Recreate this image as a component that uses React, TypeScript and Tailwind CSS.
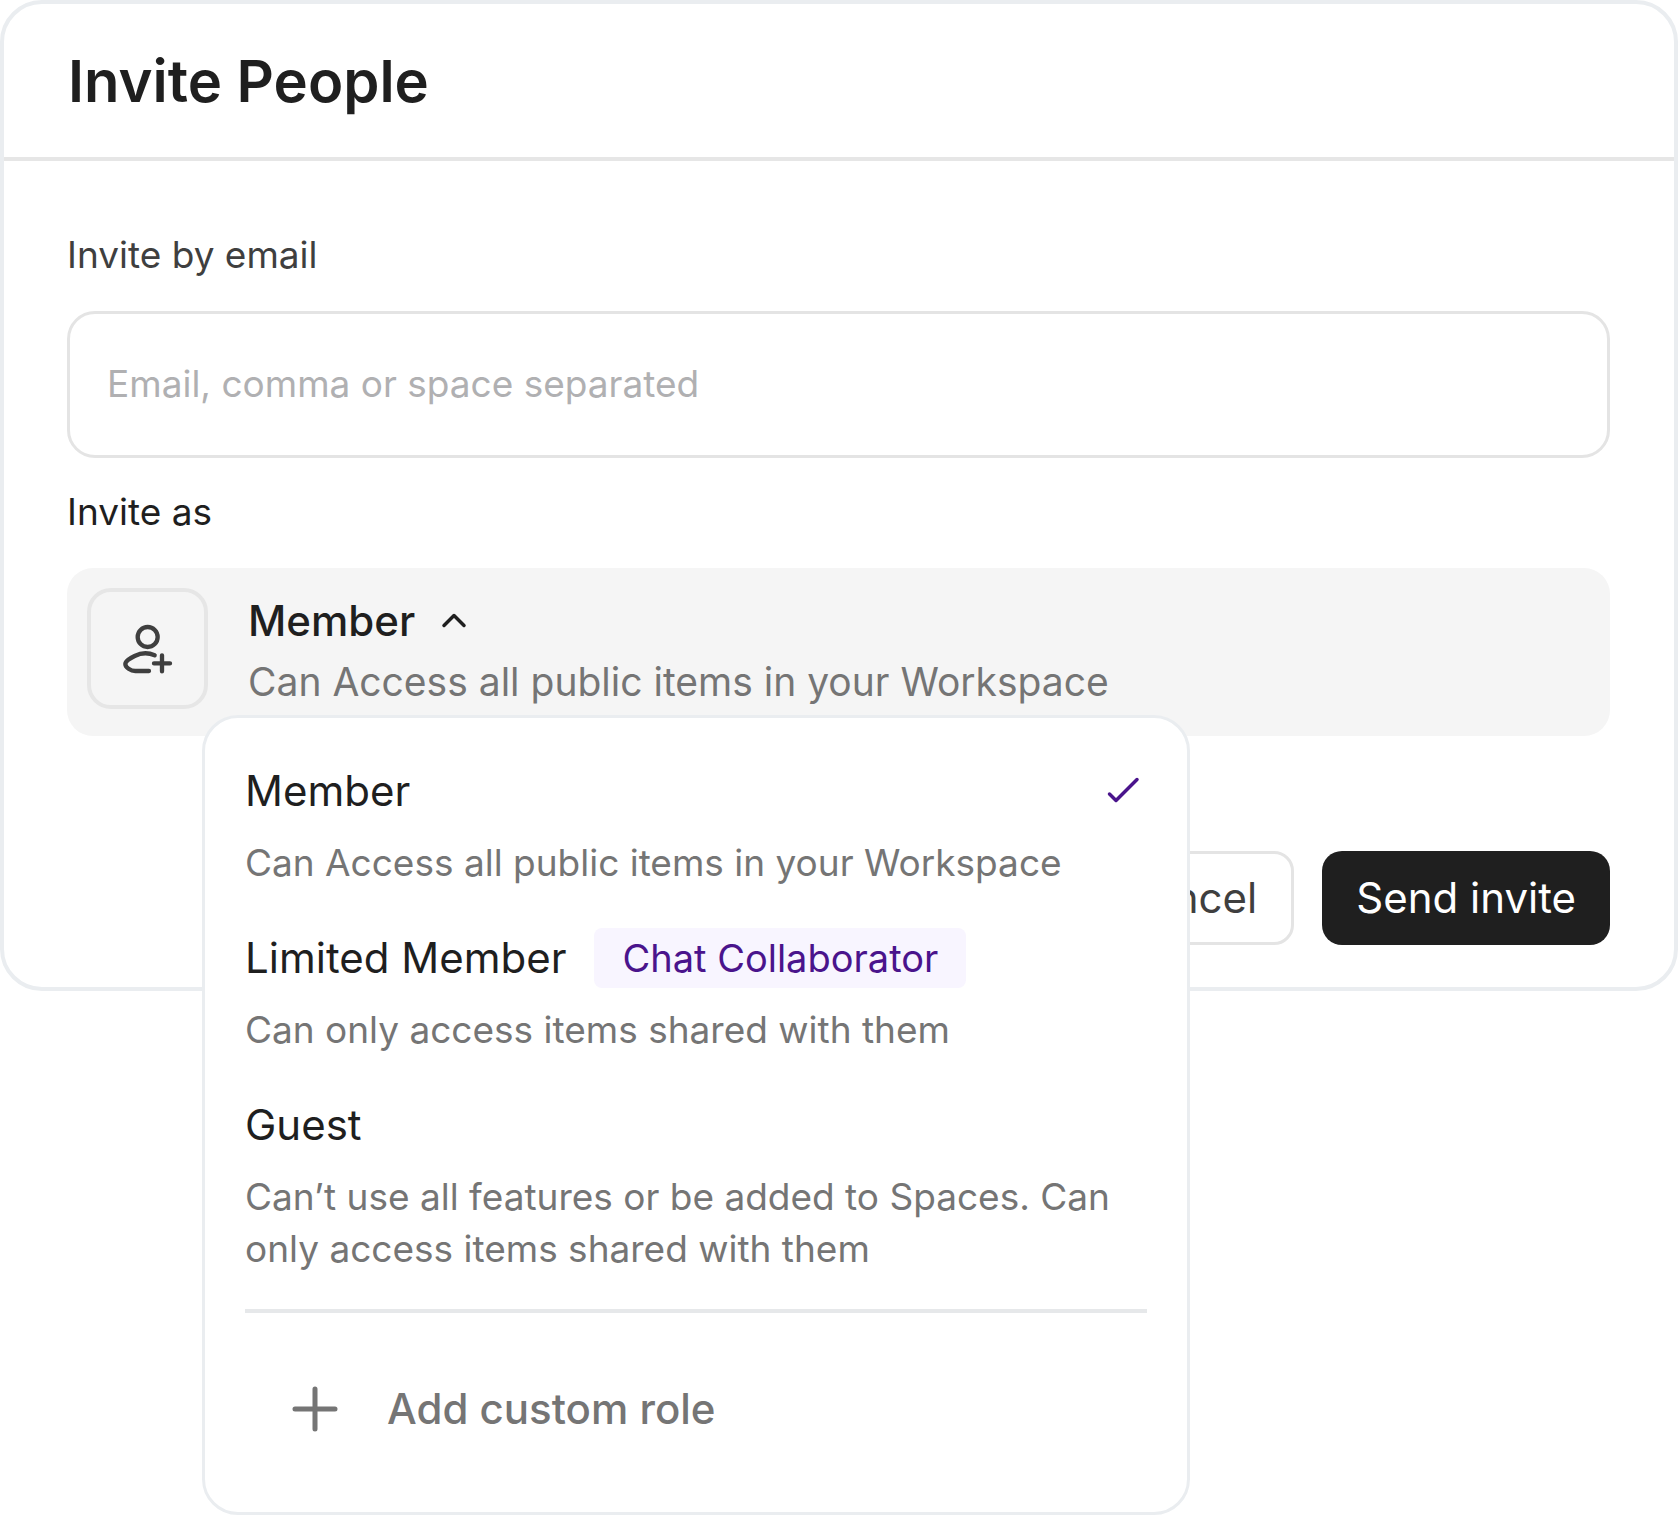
import { useState } from "react";
import type { FormEvent } from "react";
import clsx from "clsx";

type Role = {
  id: string;
  name: string;
  description: string;
  badge?: string;
};

const ROLES: Role[] = [
  {
    id: "member",
    name: "Member",
    description: "Can Access all public items in your Workspace",
  },
  {
    id: "limited",
    name: "Limited Member",
    description: "Can only access items shared with them",
    badge: "Chat Collaborator",
  },
  {
    id: "guest",
    name: "Guest",
    description:
      "Can’t use all features or be added to Spaces. Can only access items shared with them",
  },
];

function PersonAddIcon() {
  return (
    <svg
      viewBox="0 0 168 168"
      className="size-14 text-[#3f3f3f]"
      fill="none"
      stroke="currentColor"
      strokeWidth="13"
      strokeLinecap="round"
      strokeLinejoin="round"
      aria-hidden
    >
      <circle cx="83" cy="48" r="30" />
      <path d="M104 103C86 95 62 96 44 105C30 112 16 119 16 129C16 139 32 150 46 150H87" />
      <path d="M102 127H150M126 103V151" />
    </svg>
  );
}

function ChevronIcon({ open }: { open: boolean }) {
  return (
    <svg
      viewBox="0 0 32 32"
      className={clsx("size-8", !open && "rotate-180")}
      fill="none"
      stroke="currentColor"
      strokeWidth="3.5"
      strokeLinecap="round"
      strokeLinejoin="round"
      aria-hidden
    >
      <path d="M5 20.5L15 10.5L25 20.5" />
    </svg>
  );
}

function CheckIcon() {
  return (
    <svg
      viewBox="0 0 40 40"
      className="size-10 shrink-0 text-[#4a148c]"
      fill="none"
      stroke="currentColor"
      strokeWidth="3.5"
      strokeLinecap="round"
      strokeLinejoin="round"
      aria-hidden
    >
      <path d="M2.5 23L9 29.5L30 8.5" />
    </svg>
  );
}

function PlusIcon() {
  return (
    <svg
      viewBox="0 0 48 48"
      className="size-12"
      fill="none"
      stroke="currentColor"
      strokeWidth="5"
      strokeLinecap="round"
      aria-hidden
    >
      <path d="M4 24H44M24 4V44" />
    </svg>
  );
}

function RoleOption({
  role,
  selected,
  onSelect,
}: {
  role: Role;
  selected: boolean;
  onSelect: () => void;
}) {
  return (
    <button
      type="button"
      role="option"
      aria-selected={selected}
      onClick={onSelect}
      className="block w-full text-left"
    >
      <span className="flex h-15 items-center justify-between">
        <span className="flex items-center gap-7">
          <span className="text-[42px] leading-15 text-[#1f1f1f]">{role.name}</span>
          {role.badge && (
            <span className="rounded-lg bg-[#f8f5ff] px-7 text-[38px] leading-15 text-[#4a148c]">
              {role.badge}
            </span>
          )}
        </span>
        {selected && <CheckIcon />}
      </span>
      <span className="mt-4 block text-[37px] leading-[52px] text-[#757575]">
        {role.description}
      </span>
    </button>
  );
}

function RolePicker() {
  const [open, setOpen] = useState(true);
  const [roleId, setRoleId] = useState("member");
  const role = ROLES.find((r) => r.id === roleId) ?? ROLES[0];

  return (
    <div className="relative">
      <button
        type="button"
        id="role"
        aria-haspopup="listbox"
        aria-expanded={open}
        onClick={() => setOpen(!open)}
        className="flex h-42 w-full items-start gap-10 rounded-[26px] bg-[#f5f5f5] p-5 text-left"
      >
        <span className="flex size-[121px] shrink-0 items-center justify-center rounded-3xl border-4 border-[#e6e6e6]">
          <PersonAddIcon />
        </span>
        <span className="flex flex-col gap-px pt-[3px]">
          <span className="flex items-center gap-6 text-[42px] leading-15 font-medium text-[#1f1f1f]">
            {role.name}
            <ChevronIcon open={open} />
          </span>
          <span className="text-[39px] leading-15 text-[#757575]">{role.description}</span>
        </span>
      </button>

      {open && (
        <div className="absolute top-[147px] left-[135px] z-10 w-[988px] rounded-[36px] border-3 border-[#eaedf0] bg-white px-10 pt-[43px] pb-[73px]">
          <div role="listbox" aria-label="Role" className="flex flex-col gap-[39px]">
            {ROLES.map((r) => (
              <RoleOption
                key={r.id}
                role={r}
                selected={r.id === roleId}
                onSelect={() => setRoleId(r.id)}
              />
            ))}
          </div>
          <hr className="mt-[34px] border-t-4 border-[#e6e8ea]" />
          <button
            type="button"
            className="mt-[66px] flex items-center gap-12 pl-[46px] text-[42px] leading-15 font-medium text-[#757575]"
          >
            <PlusIcon />
            Add custom role
          </button>
        </div>
      )}
    </div>
  );
}

export default function App() {
  const [emails, setEmails] = useState("");

  const onSubmit = (e: FormEvent) => {
    e.preventDefault();
    setEmails("");
  };

  return (
    <div className="min-h-screen bg-white font-['Inter',sans-serif]">
      <form
        onSubmit={onSubmit}
        className="rounded-[42px] border-4 border-[#eaedf0] bg-white"
      >
        <header className="border-b-4 border-[#e6e6e6] px-16 pt-[39px] pb-[38px]">
          <h1 className="text-[58px] leading-19 font-semibold text-[#1f1f1f]">Invite People</h1>
        </header>

        <div className="flex flex-col pt-17 pr-16 pb-[42px] pl-[63px]">
          <label htmlFor="emails" className="text-[37px] leading-[52px] text-[#3f3f3f]">
            Invite by email
          </label>
          <input
            id="emails"
            type="text"
            value={emails}
            onChange={(e) => setEmails(e.target.value)}
            placeholder="Email, comma or space separated"
            className="mt-[30px] h-[147px] rounded-[28px] border-3 border-[#e4e4e4] px-[37px] pb-[3px] text-[37px] text-[#1f1f1f] outline-none placeholder:text-[#b0b0b2]"
          />
          <label htmlFor="role" className="mt-7 mb-[30px] text-[37px] leading-[52px] text-[#1f1f1f]">
            Invite as
          </label>
          <RolePicker />
          <div className="mt-[115px] flex justify-end gap-7 text-[42px] leading-15">
            <button
              type="button"
              className="h-[94px] rounded-[20px] border-3 border-[#e4e4e4] px-[34px] text-[#3f3f3f]"
            >
              Cancel
            </button>
            <button type="submit" className="h-[94px] rounded-[20px] bg-[#1f1f1f] px-[34px] text-white">
              Send invite
            </button>
          </div>
        </div>
      </form>
    </div>
  );
}
